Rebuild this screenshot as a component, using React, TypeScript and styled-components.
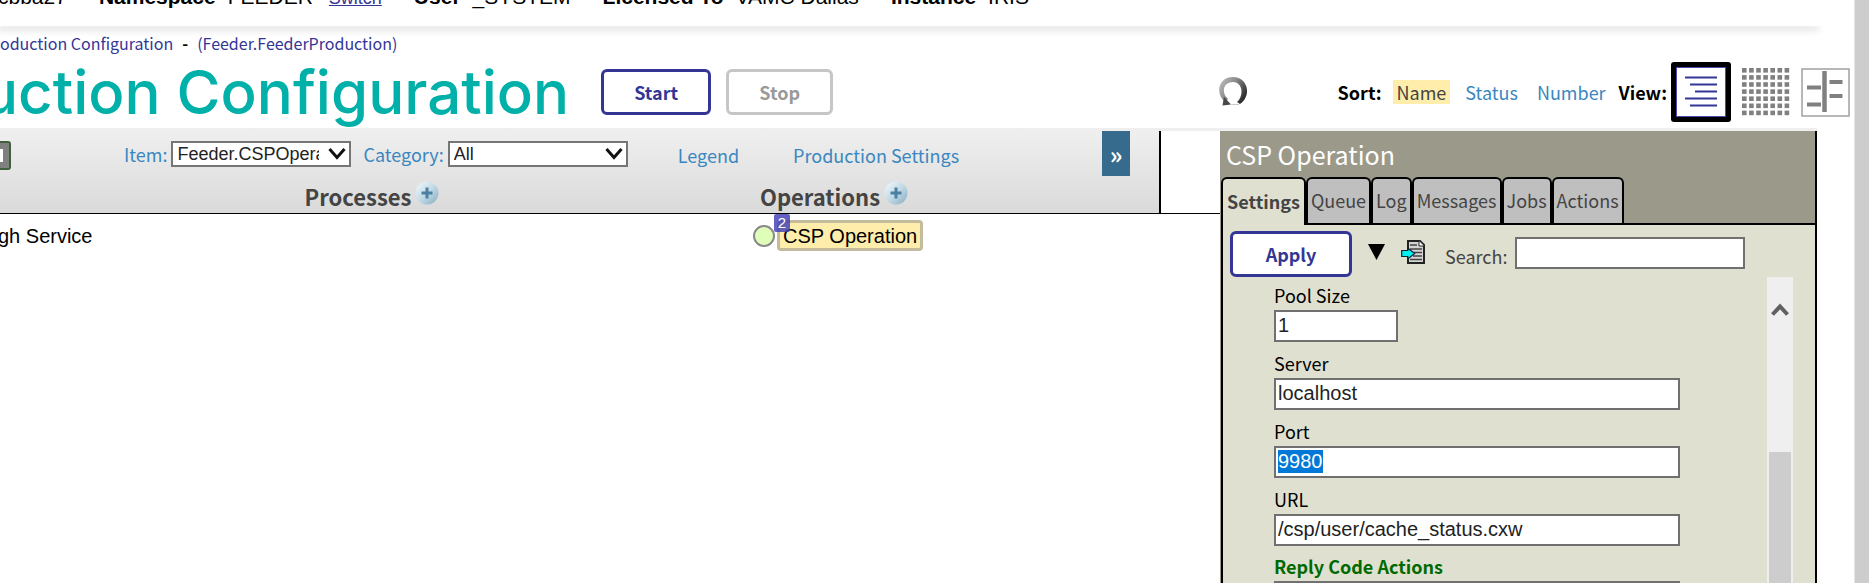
import React, { useEffect, useRef } from "react";
import styled, { createGlobalStyle } from "styled-components";

const sans = '"Noto Sans CJK SC", "Noto Sans", sans-serif';
const arial = '"Liberation Sans", Arial, sans-serif';
const indigo = "#333695";
const link = "#3a87c0";

const GlobalStyle = createGlobalStyle`
  *, *::before, *::after { box-sizing: border-box; }
  html, body { margin: 0; background: #fff; overflow: hidden; }
  body { font-family: ${sans}; font-size: 18px; line-height: 24px; color: #000; }
  button, input, select { font: inherit; margin: 0; }
  a { text-decoration: none; }
`;

const Window = styled.div`
  display: flex;
  height: 100vh;
  overflow: hidden;
`;

const Page = styled.div`
  flex: 1;
  min-width: 0;
  display: flex;
  flex-direction: column;
`;

const WindowScrollbar = styled.div`
  flex: none;
  width: 15px;
  background: #cdcdcd;
  border-left: 1px solid #e6e6e6;
`;

const Banner = styled.header`
  flex: none;
  height: 26px;
  margin-right: 37px;
  overflow: hidden;
  background: #fff;
`;

const BannerShadow = styled.div`
  flex: none;
  margin-right: 37px;
  box-shadow: 0 2px 7px 2px rgba(0, 0, 0, 0.16);
  clip-path: inset(0 -8px -12px 0);
`;

const BannerList = styled.dl`
  display: flex;
  align-items: baseline;
  gap: 32px;
  margin: -15px 0 0 -2px;
  font-family: ${arial};
  font-size: 21px;
  white-space: nowrap;

  > div { display: flex; align-items: baseline; gap: 12px; }
  dt { font-weight: 700; }
  dd { margin: 0; }
  a { margin-left: 4px; font-size: 18px; color: ${indigo}; text-decoration: underline; }
`;

const Breadcrumb = styled.nav`
  flex: none;
  display: flex;
  gap: 9px;
  padding: 5px 0 1px;
  font-size: 16px;
  white-space: nowrap;
  a { color: ${indigo}; }
  span { font-weight: 700; }
`;

const TitleRow = styled.div`
  flex: none;
  display: flex;
  align-items: center;
  height: 72px;
  padding-right: 4px;
`;

const Title = styled.h1`
  margin: 0 32px 0 -18px;
  font-family: Inter, ${sans};
  font-size: 60px;
  font-weight: 500;
  line-height: 64px;
  color: #00b0a9;
  white-space: nowrap;
`;

const OutlineButton = styled.button<{ $width: number }>`
  flex: none;
  width: ${(p) => p.$width}px;
  height: 46px;
  padding: 0;
  border: 3px solid ${indigo};
  border-radius: 6px;
  background: #fff;
  font-size: 18px;
  font-weight: 700;
  color: ${indigo};
  &:disabled { border-color: #c6c6c6; color: #999; }
`;

const TitleButtons = styled.div`
  display: flex;
  gap: 15px;
`;

const ViewTools = styled.div`
  display: flex;
  align-items: center;
  margin-left: auto;
  white-space: nowrap;
`;

const IconButton = styled.button`
  flex: none;
  display: flex;
  padding: 0;
  border: 0;
  background: none;
`;

const SortGroup = styled.div`
  display: flex;
  align-items: center;
  gap: 11px;
  margin: 0 9px 0 90px;
`;

const ToolLabel = styled.span`
  font-weight: 700;
`;

const SortLink = styled.a<{ $active?: boolean }>`
  padding: 0 4px;
  color: ${(p) => (p.$active ? "#444" : link)};
  background: ${(p) => (p.$active ? "#ffedab" : "transparent")};
`;

const ViewIcons = styled.div`
  display: flex;
  align-items: center;
  gap: 11px;
  margin-left: 4px;
`;

const Main = styled.main`
  flex: 1;
  min-height: 0;
  display: flex;
  margin-right: 37px;
  border-top: 3px solid #efefef;
`;

const Workspace = styled.section`
  flex: 1;
  min-width: 0;
`;

const Ribbon = styled.div`
  display: flex;
  height: 83px;
  border-bottom: 1px solid #000;
`;

const RibbonBody = styled.div`
  flex: 1;
  min-width: 0;
  background: linear-gradient(#efefef, #dadada);
  border-right: 2px solid #000;
`;

const RibbonGap = styled.div`
  flex: none;
  width: 59px;
`;

const Filters = styled.div`
  display: flex;
  align-items: flex-start;
  height: 45px;
  padding-right: 29px;
  white-space: nowrap;
`;

const CutButton = styled.button`
  width: 11px;
  height: 29px;
  margin: 10px 113px 0 0;
  padding: 0;
  border: 2px solid #40603c;
  border-left: 0;
  border-radius: 0 3px 3px 0;
  background: #808080;
  display: flex;
  align-items: center;
  &::before { content: ""; width: 3px; height: 13px; background: #fff; }
`;

const FilterField = styled.label`
  display: flex;
  align-items: center;
  gap: 4px;
  height: 26px;
  margin: 10px 12px 0 0;
  color: ${link};
`;

const SelectBox = styled.span`
  display: grid;
  align-items: center;
  > * { grid-area: 1 / 1; }
  > svg { justify-self: end; margin-right: 5px; pointer-events: none; }
`;

const Select = styled.select`
  appearance: none;
  width: 180px;
  height: 26px;
  padding: 0 30px 0 4px;
  border: 2px solid #767676;
  border-radius: 0;
  background: #fff;
  color: #222;
  font-family: ${arial};
  font-size: 18px;
  line-height: 22px;
`;

const RibbonLink = styled.a`
  margin: 12px 0 0 54px;
  color: ${link};
  & + & { margin-left: 54px; }
  &:first-of-type { margin-left: 38px; }
`;

const Expand = styled.button`
  width: 28px;
  height: 45px;
  margin-left: auto;
  padding: 0;
  border: 0;
  background: #366b8d;
  color: #fff;
  font-size: 24px;
  font-weight: 700;
`;

const Columns = styled.div`
  display: grid;
  grid-template-columns: 141px 1fr 1fr 94px;
`;

const ColumnTitle = styled.h2`
  display: flex;
  justify-content: center;
  gap: 4px;
  margin: 5px 0 0;
  font-size: 22px;
  line-height: 30px;
  font-weight: 700;
  color: #444;
`;

const Rows = styled.div`
  display: grid;
  grid-template-columns: 606px 1fr;
  align-items: center;
  margin-left: -2px;
  padding-top: 6px;
  font-family: ${arial};
  font-size: 20px;
  white-space: nowrap;
`;

const Operation = styled.div`
  display: flex;
  align-items: center;
  gap: 2px;
  padding-left: 149px;
`;

const StatusDot = styled.span`
  width: 22px;
  height: 22px;
  border: 2px solid #8a8a8a;
  border-radius: 50%;
  background: #dfffb9;
`;

const OperationName = styled.button`
  position: relative;
  height: 31px;
  padding: 0 3px;
  border: 3px solid #c4bb9c;
  border-radius: 4px;
  background: #ffedab;
  font-size: 20px;
  line-height: 24px;
`;

const Badge = styled.span`
  position: absolute;
  top: -9px;
  left: -6px;
  width: 16px;
  height: 18px;
  border-radius: 2px;
  background: rgba(64, 62, 180, 0.82);
  color: #fff;
  font-size: 15px;
  line-height: 18px;
  text-align: center;
`;

const Panel = styled.aside`
  flex: none;
  width: 597px;
  display: flex;
  flex-direction: column;
  border-left: 1px solid #9b998a;
  border-right: 2px solid #000;
  background: #9b998a;
`;

const PanelTitle = styled.h2`
  margin: 0;
  padding: 7px 0 7px 5px;
  font-size: 25px;
  line-height: 32px;
  font-weight: 400;
  color: #fff;
`;

const Tabs = styled.div`
  display: flex;
  border-bottom: 2px solid #000;
`;

const Tab = styled.button<{ $active?: boolean }>`
  height: ${(p) => (p.$active ? 48 : 46)}px;
  margin-bottom: ${(p) => (p.$active ? -2 : 0)}px;
  padding: 0 ${(p) => (p.$active ? 4 : 3)}px 2px;
  border: 2px solid #000;
  border-bottom: 0;
  border-radius: 6px 6px 0 0;
  background: ${(p) => (p.$active ? "#dfe0d0" : "#bfbfbf")};
  font-size: 18px;
  font-weight: ${(p) => (p.$active ? 700 : 400)};
  color: #444;
`;

const PanelBody = styled.div`
  flex: 1;
  min-height: 0;
  display: flex;
  flex-direction: column;
  border-left: 2px solid #000;
  background: #dfe0d0;
`;

const ActionBar = styled.div`
  flex: none;
  display: flex;
  align-items: flex-start;
  height: 52px;
  padding: 6px 0 0 7px;
`;

const MoreIcon = styled(IconButton)`
  margin: 13px 16px 0;
`;

const ImportIcon = styled(IconButton)`
  margin-top: 9px;
`;

const SearchField = styled.label`
  display: flex;
  align-items: flex-end;
  gap: 8px;
  margin: 6px 0 0 20px;
  line-height: 26px;
  color: #444;
`;

const TextInput = styled.input<{ $width: number }>`
  display: block;
  width: ${(p) => p.$width}px;
  height: 32px;
  padding: 0 2px 2px;
  border: 2px solid #707070;
  border-radius: 0;
  outline: 0;
  background: #fff;
  color: #222;
  font-family: ${arial};
  font-size: 20px;
  &::selection { background: #0078d7; color: #fff; }
`;

const SettingsScroll = styled.div`
  flex: 1;
  min-height: 0;
  display: flex;
  justify-content: space-between;
  padding: 0 22px 0 51px;
  overflow: hidden;
`;

const Fields = styled.form`
  padding-top: 7px;
`;

const Field = styled.label`
  display: flex;
  flex-direction: column;
  gap: 4px;
  margin-bottom: 10px;
  line-height: 22px;
`;

const GroupTitle = styled.h3`
  margin: -1px 0 4px;
  font-size: 18px;
  line-height: 22px;
  color: #006a00;
`;

const PanelScrollbar = styled.div`
  width: 26px;
  padding: 25px 2px 0;
  background: #efefef;
  svg { display: block; margin: 0 auto 135px; }
`;

const Thumb = styled.div`
  height: 400px;
  background: #cdcdcd;
`;

const Chevron = () => (
  <svg width="18" height="14" viewBox="0 0 18 14" aria-hidden="true">
    <path d="M1.5 2 L9 10.5 L16.5 2" fill="none" stroke="#111" strokeWidth="3" />
  </svg>
);

const PlusIcon = () => (
  <svg width="24" height="24" viewBox="0 0 24 24" aria-hidden="true">
    <defs>
      <linearGradient id="orb" x1="0.1" y1="0.1" x2="0.9" y2="0.9">
        <stop offset="0" stopColor="#eaf4f9" />
        <stop offset="0.5" stopColor="#c3dae6" />
        <stop offset="1" stopColor="#94b5c8" />
      </linearGradient>
    </defs>
    <circle cx="12" cy="12" r="11.5" fill="url(#orb)" />
    <path d="M12 6.5v11M6.5 12h11" stroke="#4a80a3" strokeWidth="3" />
  </svg>
);

const ReloadIcon = () => (
  <svg width="30" height="32" viewBox="0 0 30 32" aria-hidden="true">
    <defs>
      <linearGradient id="steel" x1="0" y1="0" x2="1" y2="0.6">
        <stop offset="0" stopColor="#c4c4c4" />
        <stop offset="0.5" stopColor="#8a8a8a" />
        <stop offset="1" stopColor="#2c2c2c" />
      </linearGradient>
    </defs>
    <path
      d="M7 26 C-3 18 0 1 15 1 C30 1 34 20 22 28 L19 26 C26 20 25 6 15 6 C5 6 3 17 10 23 Z"
      fill="url(#steel)"
    />
    <path d="M4.5 29.5 L6 21 L13 28.5 Z" fill="#484848" />
    <path d="M12 28.5h9" stroke="#c8c8c8" />
  </svg>
);

const ListViewIcon = () => (
  <svg width="60" height="60" viewBox="0 0 60 60" aria-hidden="true">
    <rect width="60" height="60" rx="3" fill="#000" />
    <rect x="5.5" y="5.5" width="49" height="49" fill="#fff" stroke="#4a4ab0" />
    <path d="M14 15.5h32M19 22.5h27M24 29.5h22M14 36.5h32M19 43.5h27" stroke={indigo} strokeWidth="2" />
  </svg>
);

const GridViewIcon = () => (
  <svg width="48" height="48" viewBox="0 0 48 48" aria-hidden="true">
    {[0, 1, 2, 3, 4, 5, 6].map((r) =>
      [0, 1, 2, 3, 4, 5, 6].map((c) => (
        <rect key={`${r}-${c}`} x={c * 7.1} y={r * 7.1} width="4.6" height="4.6" fill="#808080" />
      ))
    )}
  </svg>
);

const SplitViewIcon = () => (
  <svg width="49" height="49" viewBox="0 0 49 49" aria-hidden="true">
    <rect x="1" y="1" width="47" height="47" fill="#fff" stroke="#a0a0a0" strokeWidth="1.5" />
    <path d="M23.5 3v41" stroke="#808080" strokeWidth="4.5" />
    <path d="M6 19.5h14M6 36.5h14M28.5 14h13M28.5 28h13" stroke="#808080" strokeWidth="4.2" />
  </svg>
);

const DocumentIcon = () => (
  <svg width="24" height="24" viewBox="0 0 24 24" aria-hidden="true">
    <path d="M8 1h11l4 4v18H7V1z" fill="#d4d4d4" stroke="#222" strokeWidth="2" />
    <path d="M18 1v5h5" fill="#fff" stroke="#222" />
    <path d="M9 5h7M9 9h12M12 12.5h9M12 16h9M9 19.5h12" stroke="#444" strokeWidth="1.5" />
    <path d="M.7 10.5h6V8l7 5.5-7 5.5v-2.5h-6z" fill="#00f0f0" stroke="#123" strokeWidth="1.2" />
  </svg>
);

const tabs = ["Settings", "Queue", "Log", "Messages", "Jobs", "Actions"];

export default function App() {
  const port = useRef<HTMLInputElement>(null);
  useEffect(() => {
    port.current?.focus({ preventScroll: true });
    port.current?.select();
  }, []);

  return (
    <Window>
      <GlobalStyle />
      <Page>
        <Banner>
          <BannerList>
            <div><dd>cbba27</dd></div>
            <div><dt>Namespace</dt><dd>FEEDER</dd><dd><a href="#switch">Switch</a></dd></div>
            <div><dt>User</dt><dd>_SYSTEM</dd></div>
            <div><dt>Licensed To</dt><dd>VAMC Dallas</dd></div>
            <div><dt>Instance</dt><dd>IRIS</dd></div>
          </BannerList>
        </Banner>
        <BannerShadow />
        <Breadcrumb>
          <a href="#configuration">oduction Configuration</a>
          <span>-</span>
          <a href="#production">(Feeder.FeederProduction)</a>
        </Breadcrumb>
        <TitleRow>
          <Title>uction Configuration</Title>
          <TitleButtons>
            <OutlineButton $width={110}>Start</OutlineButton>
            <OutlineButton $width={107} disabled>Stop</OutlineButton>
          </TitleButtons>
          <ViewTools>
            <IconButton aria-label="Reload"><ReloadIcon /></IconButton>
            <SortGroup>
              <ToolLabel>Sort:</ToolLabel>
              <SortLink href="#name" $active>Name</SortLink>
              <SortLink href="#status">Status</SortLink>
              <SortLink href="#number">Number</SortLink>
            </SortGroup>
            <ToolLabel>View:</ToolLabel>
            <ViewIcons>
              <IconButton aria-label="List view"><ListViewIcon /></IconButton>
              <IconButton aria-label="Grid view"><GridViewIcon /></IconButton>
              <IconButton aria-label="Split view"><SplitViewIcon /></IconButton>
            </ViewIcons>
          </ViewTools>
        </TitleRow>
        <Main>
          <Workspace>
            <Ribbon>
              <RibbonBody>
                <Filters>
                  <CutButton aria-label="Status" />
                  <FilterField>
                    Item:
                    <SelectBox>
                      <Select><option>Feeder.CSPOperation</option></Select>
                      <Chevron />
                    </SelectBox>
                  </FilterField>
                  <FilterField>
                    Category:
                    <SelectBox>
                      <Select><option>All</option></Select>
                      <Chevron />
                    </SelectBox>
                  </FilterField>
                  <RibbonLink href="#legend">Legend</RibbonLink>
                  <RibbonLink href="#settings">Production Settings</RibbonLink>
                  <Expand aria-label="Expand">»</Expand>
                </Filters>
                <Columns>
                  <span />
                  <ColumnTitle>Processes<IconButton aria-label="Add process"><PlusIcon /></IconButton></ColumnTitle>
                  <ColumnTitle>Operations<IconButton aria-label="Add operation"><PlusIcon /></IconButton></ColumnTitle>
                </Columns>
              </RibbonBody>
              <RibbonGap />
            </Ribbon>
            <Rows>
              <span>gh Service</span>
              <Operation>
                <StatusDot />
                <OperationName>CSP Operation<Badge>2</Badge></OperationName>
              </Operation>
            </Rows>
          </Workspace>
          <Panel>
            <PanelTitle>CSP Operation</PanelTitle>
            <Tabs>
              {tabs.map((t, i) => <Tab key={t} $active={i === 0}>{t}</Tab>)}
            </Tabs>
            <PanelBody>
              <ActionBar>
                <OutlineButton $width={122}>Apply</OutlineButton>
                <MoreIcon aria-label="More">
                  <svg width="17" height="16" viewBox="0 0 17 16"><path d="M0 0h17L8.5 16z" /></svg>
                </MoreIcon>
                <ImportIcon aria-label="Import"><DocumentIcon /></ImportIcon>
                <SearchField>Search:<TextInput $width={230} type="text" /></SearchField>
              </ActionBar>
              <SettingsScroll>
                <Fields>
                  <Field>Pool Size<TextInput $width={124} defaultValue="1" /></Field>
                  <Field>Server<TextInput $width={406} defaultValue="localhost" /></Field>
                  <Field>Port<TextInput $width={406} defaultValue="9980" ref={port} /></Field>
                  <Field>URL<TextInput $width={406} defaultValue="/csp/user/cache_status.cxw" /></Field>
                  <GroupTitle>Reply Code Actions</GroupTitle>
                  <TextInput $width={406} aria-label="Reply Code Actions" />
                </Fields>
                <PanelScrollbar>
                  <svg width="18" height="15" viewBox="0 0 18 15"><path d="M1.5 12.5L9 4.5l7.5 8" fill="none" stroke="#606060" strokeWidth="4" /></svg>
                  <Thumb />
                </PanelScrollbar>
              </SettingsScroll>
            </PanelBody>
          </Panel>
        </Main>
      </Page>
      <WindowScrollbar />
    </Window>
  );
}
